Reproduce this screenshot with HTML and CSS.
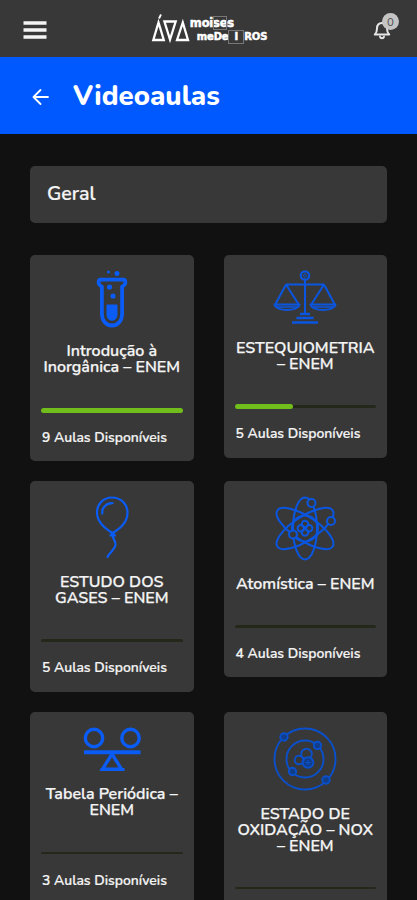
FILE: index.html
```html
<!doctype html>
<html lang="pt-BR">
<head>
<meta charset="UTF-8">
<meta name="viewport" content="width=device-width, initial-scale=1">
<title>Videoaulas</title>
	<link rel="stylesheet" href="styles.css">
</head>

<body>
<header class="topbar">
	<button class="icon-button" type="button" aria-label="Menu">
		<svg width="24" height="20" viewBox="0 0 24 20"><path d="M.5 3h23M.5 10h23M.5 17h23" stroke="#f4f4f4" stroke-width="3.6"/></svg>
	</button>
	<div class="logo">
		<svg width="39" height="30" viewBox="0 0 39 30" fill="none" stroke="#fff" stroke-width="2.3" stroke-linejoin="miter"><path d="M2.300 27 7.500 9.500l5.300 17.500zM13.400 8.500h11.300L19 26.500zM26 27l5.800-17.500L37 27z"/><path d="M8 5.500 10 1.500" stroke-width="1.8"/></svg>
		<div class="logo-text">
			<div class="logo-line">moi<span class="logo-box">se</span>s</div>
			<div class="logo-line logo-second">meDe<span class="logo-box logo-i">I</span>ROS</div>
		</div>
	</div>
	<button class="icon-button bell" type="button" aria-label="Notificações">
		<svg width="18" height="20" viewBox="0 0 18 20" fill="none" stroke="#e6e6e6" stroke-width="2" stroke-linecap="round" stroke-linejoin="round"><path d="M1.800 14.500h14.400C14.500 13 14 11.500 14 8.500c0-3.200-1.800-5.500-5-5.500s-5 2.300-5 5.500c0 3-.5 4.500-2.200 6zM7 16.800c.5 2 3.500 2 4 0"/></svg>
		<span class="badge">0</span>
	</button>
</header>

<div class="page-title">
	<svg width="17" height="18" viewBox="0 0 17 18" fill="none" stroke="#fff" stroke-width="1.800" stroke-linecap="round" stroke-linejoin="round"><path d="M16 9H1.500M8.500 2l-7 7 7 7"/></svg>
	<h1>Videoaulas</h1>
</div>

<main class="content">
	<div class="section">Geral</div>

	<div class="cards">
		<div class="card">
			<svg class="icon" width="34" height="58" viewBox="0 0 34 58" fill="none" stroke="#0a5cf5" stroke-width="3.800" stroke-linejoin="round">
				<path d="M4.500 9.700h25c2 2.300 1 5.300-2.400 7v27c0 6.500-3.700 11.800-10.100 11.800S6.900 50.200 6.900 43.700v-27C3.500 15 2.500 12 4.500 9.700z"/>
				<path d="M12 35h10v10c0 7-10 7-10 0z" fill="#0a5cf5" stroke-width="1"/>
				<g fill="#0a5cf5" stroke="none"><circle cx="14.500" cy="17" r="2.600"/><circle cx="18" cy="26" r="2.600"/><circle cx="22" cy="3.500" r="2.500"/><circle cx="13.500" cy="2" r="1.500"/></g>
			</svg>
			<h2>Introdução à<br>Inorgânica – ENEM</h2>
			<div class="progress"><div class="bar" style="width: 100%"></div></div>
			<p>9 Aulas Disponíveis</p>
		</div>

		<div class="card">
			<svg class="icon" width="64" height="54.500" viewBox="0 0 64 54.500" fill="none" stroke="#0a56e0" stroke-width="2" stroke-linejoin="round">
				<circle cx="32" cy="5.500" r="4.200" stroke-width="2.200"/><circle cx="32" cy="5.500" r="1.500" stroke-width="1"/>
				<path d="M32 10v33M13 14.500h38M13 14.500 2 35M13 14.500 26 35M51 14.500 38 35M51 14.500 62 35"/>
				<path d="M1.500 34.500h25c-2 7.300-23 7.300-25 0zM37.500 34.500h25c-2 7.300-23 7.300-25 0z"/>
				<path d="M3 37h22M39 37h22" stroke-width="1.500"/>
				<path d="M27 44h10M23.500 48h17M19 52.500h26" stroke-width="2.700"/>
			</svg>
			<h2>ESTEQUIOMETRIA<br>– ENEM</h2>
			<div class="progress"><div class="bar" style="width: 41%"></div></div>
			<p>5 Aulas Disponíveis</p>
		</div>

		<div class="card">
			<svg class="icon" width="34" height="62.500" viewBox="0 0 34 62.500" fill="none" stroke="#0a5cf5" stroke-width="2.200" stroke-linecap="round" stroke-linejoin="round">
				<path d="M17.500 37C9 32 2 24.500 2 16.500 2 8 8.500 1.500 17 1.500s15.500 6.500 15.500 15C32.500 24.500 26.500 32 17.500 37z"/>
				<path d="M7.300 17.500C6.500 12 11 7 17.500 7.200"/>
				<path d="M15.500 39.500 17.500 37l2.500 2.500zM17.500 39.500c.5 3.500 3.500 5.500 3 9.500-.5 4.500-5 6-8 12"/>
			</svg>
			<h2>ESTUDO DOS<br>GASES – ENEM</h2>
			<div class="progress"></div>
			<p>5 Aulas Disponíveis</p>
		</div>

		<div class="card">
			<svg class="icon" width="62" height="64.500" viewBox="0 0 62 64.500" fill="none" stroke="#0a56e0" stroke-width="2">
				<ellipse cx="31" cy="32.500" rx="12" ry="31"/>
				<ellipse cx="31" cy="32.500" rx="12" ry="33" transform="rotate(-57 31 32.500)"/>
				<ellipse cx="31" cy="32.500" rx="12" ry="33" transform="rotate(57 31 32.500)"/>
				<circle cx="31" cy="32.500" r="13"/>
				<g fill="#383838"><circle cx="37.500" cy="7" r="4"/><circle cx="57" cy="25" r="4"/><circle cx="19" cy="38.500" r="4"/></g>
				<circle cx="31" cy="28" r="3.200"/><circle cx="31" cy="36.500" r="3.200"/><circle cx="26.800" cy="32.300" r="3.200"/><circle cx="35.200" cy="32.300" r="3.200"/>
			</svg>
			<h2>Atomística – ENEM</h2>
			<div class="progress"></div>
			<p>4 Aulas Disponíveis</p>
		</div>

		<div class="card">
			<svg class="icon" width="58" height="44.500" viewBox="0 0 58 44.500" fill="none" stroke="#0a5cf5" stroke-width="3.400">
				<circle cx="11" cy="11" r="8.700"/><circle cx="47.500" cy="11" r="8.700"/>
				<path d="M1 25.300h56.500" stroke-width="4"/>
				<path d="M29 27 19.500 42.200h19z"/><path d="M17.500 42.500h24" stroke-width="3"/>
			</svg>
			<h2>Tabela Periódica –<br>ENEM</h2>
			<div class="progress thin"></div>
			<p>3 Aulas Disponíveis</p>
		</div>

		<div class="card last">
			<svg class="icon" width="64" height="64" viewBox="0 0 64 64" fill="none" stroke="#0a50cc" stroke-width="1.900">
				<circle cx="32" cy="32" r="30.500"/><circle cx="32" cy="32" r="18.500"/>
				<g fill="#123d88"><circle cx="11" cy="10" r="3.700"/><circle cx="53" cy="53" r="3.700"/><circle cx="44.500" cy="18.500" r="3.700"/><circle cx="19.500" cy="44.500" r="3.700"/></g>
				<circle cx="33.500" cy="27" r="5.300"/><circle cx="26" cy="33" r="4.300"/><circle cx="35" cy="35.500" r="5.300" fill="#123d88"/><path d="M32.500 35.500h5M35 33v5" stroke-width="1.200"/>
			</svg>
			<h2>ESTADO DE<br>OXIDAÇÃO – NOX<br>– ENEM</h2>
			<div class="progress thin"></div>
		</div>
	</div>
</main>
</body>
</html>
```
FILE: styles.css
```css
* {
	box-sizing: border-box;
}
html {
	height: 100%;
	overflow: hidden;
}
body {
	margin: 0;
	height: 100%;
	overflow: hidden;
	background-color: #111;
	color: #f4f4f4;
	font-family: Nunito, Lato, sans-serif;
}
.topbar {
	display: flex;
	align-items: center;
	justify-content: space-between;
	height: 57px;
	padding: 2px 25px 0 23px;
	background: #383838;
}
.icon-button {
	display: flex;
	padding: 0;
	border: 0;
	background: none;
}
.logo {
	display: flex;
	margin-right: 2px;
}
.logo svg {
	margin-top: -2px;
}
.logo-text {
	padding-top: 1px;
	font-family: "DejaVu Sans", sans-serif;
	font-weight: bold;
	font-size: 11.5px;
	line-height: 14px;
	letter-spacing: -0.2px;
	color: #fff;
	-webkit-text-stroke: 0.5px #fff;
}
.logo-line {
	display: flex;
	height: 14px;
}
.logo-second {
	padding-left: 7px;
	font-size: 10px;
}
.logo-box {
	outline: 1px solid #777;
	outline-offset: -1px;
}
.logo-i {
	width: 16px;
	text-align: center;
}
.bell {
	position: relative;
	width: 19px;
}
.badge {
	position: absolute;
	top: -7px;
	right: -7px;
	width: 17px;
	height: 17px;
	border-radius: 50%;
	background: #c4c4c4;
	color: #555;
	font: 11px/17px Lato, sans-serif;
	text-align: center;
}

.page-title {
	display: flex;
	align-items: center;
	gap: 24px;
	height: 77px;
	padding-left: 32px;
	background: #0059ff;
}
.page-title svg {
	margin-top: 2px;
}
h1 {
	margin: 0;
	font-size: 27.6px;
	font-weight: 800;
	line-height: 36px;
	color: #fff;
}

.content {
	padding: 32px 30px 0;
}
.section {
	height: 57px;
	padding-left: 17px;
	border-radius: 5px;
	background: #383838;
	font-size: 19.6px;
	font-weight: 600;
	line-height: 56px;
	-webkit-text-stroke: 0.2px;
}
.cards {
	display: grid;
	grid-template-columns: 1fr 1fr;
	align-items: start;
	gap: 20px 30px;
	margin-top: 32px;
}
.card {
	padding: 15px 11px 0;
	border-radius: 5px;
	background: #383838;
}
.last {
	padding-bottom: 50px;
}
.icon {
	display: block;
	margin: 0 auto 15px;
}
h2 {
	margin: 0 -6px;
	font-size: 16px;
	font-weight: 600;
	line-height: 16.4px;
	text-align: center;
	white-space: nowrap;
	-webkit-text-stroke: 0.25px;
}
.progress {
	height: 3px;
	margin-top: 32.7px;
	border-radius: 2px;
	background: #23281b;
}
.thin {
	height: 2px;
	margin-bottom: 1px;
}
.bar {
	position: relative;
	top: -1px;
	height: 5px;
	border-radius: 3px;
	background: #70bd1b;
}
p {
	margin: 0;
	height: 49.5px;
	padding: 17px 0 0 1px;
	font-size: 13.9px;
	font-weight: 600;
	line-height: 18px;
	white-space: nowrap;
	-webkit-text-stroke: 0.2px;
}
```
